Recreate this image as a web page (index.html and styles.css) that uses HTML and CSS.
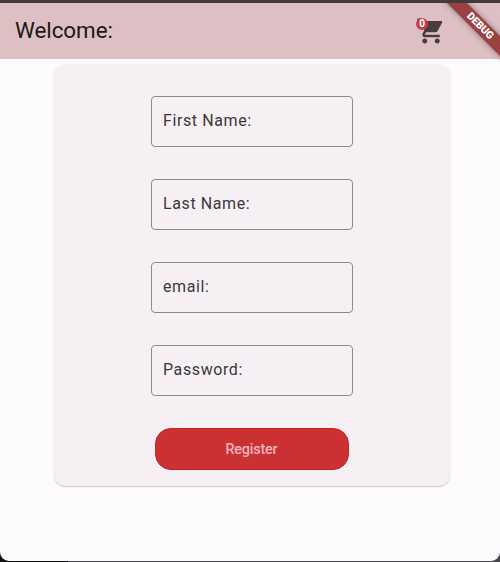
FILE: index.html
```html
<!DOCTYPE html>
<html lang="en">
<head>
<meta charset="utf-8">
<title>Welcome</title>
<link rel="stylesheet" href="styles.css">
</head>
<body>
<div class="window">
  <header class="app-bar">
    <h1 class="title">Welcome:</h1>
    <div class="cart">
      <svg class="cart-icon" viewBox="0 0 24 24"><path d="M7 18c-1.1 0-1.99.9-1.99 2S5.9 22 7 22s2-.9 2-2-.9-2-2-2zM1 2v2h2l3.6 7.59-1.35 2.45c-.16.28-.25.61-.25.96 0 1.1.9 2 2 2h12v-2H7.42c-.14 0-.25-.11-.25-.25l.03-.12.9-1.63h7.45c.75 0 1.41-.41 1.75-1.03l3.58-6.49c.08-.14.12-.31.12-.48 0-.55-.45-1-1-1H5.21l-.94-2H1zm16 16c-1.1 0-1.99.9-1.99 2s.89 2 1.99 2 2-.9 2-2-.9-2-2-2z"/></svg>
      <span class="badge">0</span>
    </div>
    <div class="debug">DEBUG</div>
  </header>
  <main class="card">
    <div class="field">First Name:</div>
    <div class="field">Last Name:</div>
    <div class="field">email:</div>
    <div class="field">Password:</div>
    <button class="register">Register</button>
  </main>
</div>
</body>
</html>
```
FILE: styles.css
```css
* { box-sizing: border-box; }
body {
  margin: 0;
  height: 562px;
  overflow: hidden;
  background: linear-gradient(90deg, #111 0 68px, #48464a 68px);
  font-family: Roboto, sans-serif;
}
.window {
  height: 561px;
  border-top: 3px solid #403b3c;
  border-radius: 0 0 9px 9px;
  background: #fefbff;
  overflow: hidden;
}
.app-bar {
  position: relative;
  display: flex;
  align-items: center;
  justify-content: space-between;
  height: 56px;
  padding: 0 54px 0 15px;
  background: #dec0c4;
}
.title {
  margin: 0;
  padding-bottom: 2px;
  font-size: 22.4px;
  line-height: 28px;
  font-weight: 400;
  letter-spacing: -.05px;
  color: #1d1718;
}
.cart { position: relative; width: 30px; height: 30px; }
.cart-icon { display: block; width: 30px; height: 30px; fill: #493c3f; }
.badge {
  position: absolute;
  left: 0;
  top: 2px;
  width: 12px;
  height: 12px;
  border-radius: 50%;
  background: #c73f49;
  color: #fff;
  font-size: 10px;
  line-height: 12px;
  font-weight: 700;
  text-align: center;
}
.debug {
  position: absolute;
  left: 430px;
  top: 16px;
  width: 100px;
  height: 14px;
  transform: rotate(45deg);
  background: #9c4041;
  box-shadow: 0 0 6px rgba(0, 0, 0, .4);
  color: #fff;
  font-size: 10.5px;
  line-height: 14px;
  font-weight: 900;
  letter-spacing: -.2px;
  text-align: center;
}
.card {
  display: flex;
  flex-direction: column;
  align-items: center;
  gap: 32px;
  width: 396px;
  height: 422px;
  margin: 5px 0 0 53.5px;
  padding-top: 32px;
  border-radius: 12px;
  background: #f6f0f4;
  box-shadow: 0 1px 1.5px rgba(0, 0, 0, .22);
}
.field {
  display: flex;
  align-items: center;
  width: 202px;
  height: 51px;
  padding: 0 0 2px 11.5px;
  border: 1px solid #8f888d;
  border-radius: 4px;
  color: #403639;
  font-size: 16px;
  letter-spacing: .6px;
}
.register {
  width: 194px;
  height: 42px;
  padding: 0;
  border: 1px solid #c0242a;
  border-radius: 16px;
  background: #cb3033;
  color: #f3b5bd;
  font: 500 14.4px Roboto, sans-serif;
  letter-spacing: -.2px;
}
```
